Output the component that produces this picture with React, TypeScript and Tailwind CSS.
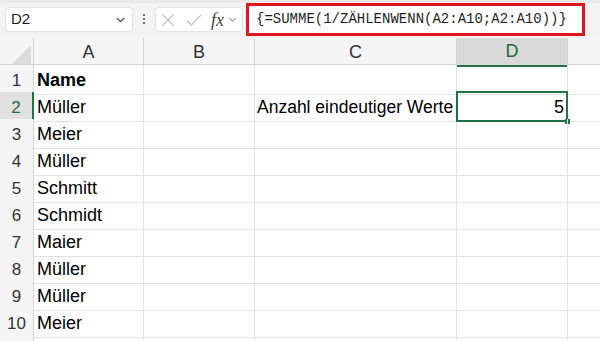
import React from "react";

const COLS = ["A", "B", "C", "D"];
const ROWS: { n: number; a?: string; bold?: boolean; c?: string; d?: string }[] = [
  { n: 1, a: "Name", bold: true },
  { n: 2, a: "Müller", c: "Anzahl eindeutiger Werte", d: "5" },
  { n: 3, a: "Meier" },
  { n: 4, a: "Müller" },
  { n: 5, a: "Schmitt" },
  { n: 6, a: "Schmidt" },
  { n: 7, a: "Maier" },
  { n: 8, a: "Müller" },
  { n: 9, a: "Müller" },
  { n: 10, a: "Meier" },
];

const grid = "grid grid-cols-[34px_110px_111px_202px_111px_1fr]";
const font = { fontFamily: '"Liberation Sans", Arial, sans-serif' };

function Chevron({ className }: { className?: string }) {
  return (
    <svg viewBox="0 0 12 12" className={className} fill="none" stroke="currentColor" strokeWidth="1.2">
      <path d="M2.5 4.5 6 8l3.5-3.5" />
    </svg>
  );
}

export default function App() {
  return (
    <div className="w-[600px] h-[341px] overflow-hidden bg-white text-[#1f1f1f]" style={font}>
      {/* formula bar */}
      <div className="h-[38px] bg-[#f3f3f3] border-t-[3px] border-[#e9e9e9] flex items-start">
        <div className="mt-[4px] ml-[5px] w-[128px] h-[25px] bg-white border border-[#e3e3e3] rounded-[4px] flex items-center justify-between pl-[5px] pr-[5px]">
          <span className="text-[15px]">D2</span>
          <Chevron className="w-[13px] h-[13px] text-[#444]" />
        </div>
        <div className="mt-[11px] ml-[10px] flex flex-col gap-[2px]">
          <span className="w-[2px] h-[2px] bg-[#444] rounded-full" />
          <span className="w-[2px] h-[2px] bg-[#444] rounded-full" />
          <span className="w-[2px] h-[2px] bg-[#444] rounded-full" />
        </div>
        <div className="mt-[4px] ml-[10px] w-[88px] h-[25px] bg-white border border-[#e3e3e3] rounded-[4px] flex items-center pl-[5px]">
          <svg viewBox="0 0 14 14" className="w-[14px] h-[14px] text-[#bdbdbd]" stroke="currentColor" strokeWidth="1.1" fill="none">
            <path d="M1.5 1.5l11 11M12.5 1.5l-11 11" />
          </svg>
          <svg viewBox="0 0 16 14" className="ml-[11px] w-[16px] h-[14px] text-[#bdbdbd]" stroke="currentColor" strokeWidth="1.1" fill="none">
            <path d="M1 7.5l4.5 4.5L15 2" />
          </svg>
          <span className="ml-[9px] italic text-[18px] text-[#444] leading-none" style={{ fontFamily: '"Liberation Serif", serif' }}>
            fx
          </span>
          <Chevron className="ml-[3px] w-[11px] h-[11px] text-[#9a9a9a]" />
        </div>
        <div className="mt-0 ml-[3px] w-[339px] h-[33px] border-[3px] border-[#e2141e] bg-white flex items-center pl-[7px]">
          <span className="text-[14px] text-[#1f1f1f]" style={{ fontFamily: '"Liberation Mono", monospace' }}>
            {"{=SUMME(1/ZÄHLENWENN(A2:A10;A2:A10))}"}
          </span>
        </div>
      </div>

      {/* column headers */}
      <div className={`${grid} h-[27px] bg-[#f5f5f5] border-b border-[#d4d4d4]`}>
        <div className="relative border-r border-[#d4d4d4]">
          <div className="absolute right-[2px] bottom-[3px] w-0 h-0 border-l-[19px] border-l-transparent border-b-[19px] border-b-[#dcdcdc]" />
        </div>
        {COLS.map((c) =>
          c === "D" ? (
            <div key={c} className="bg-[#d9d9d9] border-r border-[#d4d4d4] border-b-2 border-b-[#217346] flex items-center justify-center text-[18px] text-[#1d6b3c]">
              {c}
            </div>
          ) : (
            <div key={c} className="border-r border-[#d4d4d4] flex items-center justify-center text-[18px] text-[#333]">
              {c}
            </div>
          )
        )}
        <div />
      </div>

      {/* rows */}
      {ROWS.map((r) => (
        <div key={r.n} className={`${grid} h-[27px]`}>
          <div
            className={
              r.n === 2
                ? "bg-[#e0e0e0] border-r-2 border-r-[#217346] border-b border-[#d4d4d4] flex items-center justify-center pt-[2px] text-[17px] text-[#1d6b3c]"
                : "bg-[#f5f5f5] border-r border-[#d4d4d4] border-b border-b-[#d4d4d4] flex items-center justify-center pt-[2px] text-[17px] text-[#333]"
            }
          >
            {r.n}
          </div>
          <div className={`border-r border-b border-[#e1e1e1] flex items-center pl-[3px] pt-[2px] text-[18px] text-black ${r.bold ? "font-bold" : ""}`}>
            {r.a}
          </div>
          <div className="border-r border-b border-[#e1e1e1]" />
          <div className="border-r border-b border-[#e1e1e1] flex items-center pl-[2px] pt-[2px] text-[17.5px] text-black whitespace-nowrap">
            {r.c}
          </div>
          <div className="relative border-r border-b border-[#e1e1e1] flex items-center justify-end pr-[3px] pt-[2px] text-[18px] text-black">
            {r.d}
            {r.n === 2 && (
              <>
                <div className="absolute -left-px -top-px -right-px -bottom-px border-2 border-[#217346]" />
                <div className="absolute -right-[3px] -bottom-[3px] w-[5px] h-[5px] bg-[#217346]" />
              </>
            )}
          </div>
          <div className="border-b border-[#e1e1e1]" />
        </div>
      ))}
      <div className={`${grid} h-[27px]`}>
        <div className="bg-[#f5f5f5] border-r border-[#d4d4d4]" />
        <div className="border-r border-[#e1e1e1]" />
        <div className="border-r border-[#e1e1e1]" />
        <div className="border-r border-[#e1e1e1]" />
        <div className="border-r border-[#e1e1e1]" />
        <div />
      </div>
    </div>
  );
}
